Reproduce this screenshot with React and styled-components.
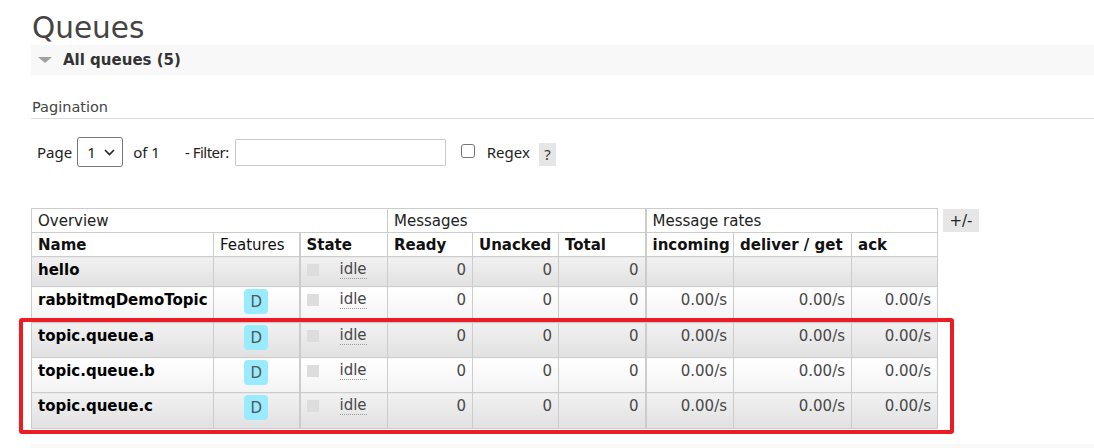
import React from 'react';
import styled, { createGlobalStyle } from 'styled-components';

const Global = createGlobalStyle`
  html, body { margin: 0; padding: 0; background: #fff; }
  body { font-family: "DejaVu Sans", Verdana, sans-serif; color: #444; }
`;

const Page = styled.div`
  position: relative;
  width: 1094px;
  height: 448px;
  overflow: hidden;
  padding-left: 31px;
  box-sizing: border-box;
`;

const Title = styled.h1`
  margin: 11px 0 0 1px;
  font-size: 29.5px;
  line-height: 34px;
  font-weight: normal;
  color: #444;
`;

const SectionBar = styled.div`
  height: 30px;
  background: #f8f8f8;
  display: flex;
  align-items: center;
  gap: 11px;
  padding-left: 7px;
  font-size: 15px;
  font-weight: bold;
  color: #333;
  margin-top: ${(p) => p.$mt || 0}px;
`;

const Triangle = styled.span`
  width: 0;
  height: 0;
  border-left: 7px solid transparent;
  border-right: 7px solid transparent;
  border-top: 6px solid #a0a0a0;
`;

const SubHeading = styled.div`
  margin-top: 23px;
  padding: 0 0 2px 1px;
  font-size: 14.5px;
  line-height: 18px;
  color: #444;
  border-bottom: 1px solid #ddd;
`;

const Controls = styled.div`
  margin-top: 18px;
  height: 30px;
  display: flex;
  align-items: center;
  padding-left: 6px;
  font-family: "Noto Sans", sans-serif;
  font-size: 15px;
  color: #222;
`;

const Text = styled.span`
  margin-left: ${(p) => p.$ml || 0}px;
  letter-spacing: ${(p) => p.$ls || 0}px;
  white-space: pre;
`;

const SelectBox = styled.div`
  margin-left: 5px;
  width: 46px;
  height: 30px;
  box-sizing: border-box;
  border: 1px solid #767676;
  border-radius: 3px;
  display: flex;
  align-items: center;
  padding-left: 9px;
  gap: 8px;
`;

const FilterInput = styled.input`
  margin-left: 6px;
  width: 211px;
  height: 27px;
  box-sizing: border-box;
  border: 1px solid #c8c8c8;
  border-radius: 1px;
  outline: none;
  padding: 0 4px;
`;

const Check = styled.input`
  appearance: none;
  margin: 0 0 0 15px;
  width: 14px;
  height: 14px;
  box-sizing: border-box;
  border: 1px solid #767676;
  border-radius: 3px;
  background: #fff;
  position: relative;
  top: -1px;
`;

const Help = styled.span`
  margin-left: 9px;
  width: 17px;
  height: 23px;
  background: #e6e6e6;
  display: flex;
  align-items: center;
  justify-content: center;
  color: #333;
  position: relative;
  top: 2px;
`;

const TableArea = styled.div`
  margin-top: 41px;
  display: flex;
  align-items: flex-start;
  gap: 5px;
`;

const Grid = styled.table`
  border-collapse: collapse;
  table-layout: fixed;
  width: 906px;
  font-size: 15px;
  line-height: 18px;
`;

const GroupHead = styled.th`
  border: 1px solid #ccc;
  border-left-width: ${(p) => (p.$thick ? 2 : 1)}px;
  text-align: left;
  font-weight: normal;
  color: #222;
  padding: 1px 6px 0;
  background: #fff;
`;

const ColHead = styled.th`
  border: 1px solid #ccc;
  border-left-width: ${(p) => (p.$thick ? 2 : 1)}px;
  text-align: left;
  font-weight: ${(p) => (p.$light ? 'normal' : 'bold')};
  color: #111;
  padding: 1px 6px 0;
  background: #fff;
  white-space: nowrap;
`;

const HeadRow = styled.tr`
  height: 24px;
`;

const BodyRow = styled.tr`
  height: ${(p) => p.$h}px;
`;

const Cell = styled.td`
  border: 1px solid #ccc;
  border-left-width: ${(p) => (p.$thick ? 2 : 1)}px;
  vertical-align: top;
  padding: ${(p) => (p.$badge ? '2px 6px 0' : '4px 6px 0')};
  text-align: ${(p) => p.$align || 'left'};
  font-weight: ${(p) => (p.$bold ? 'bold' : 'normal')};
  color: ${(p) => (p.$bold ? '#000' : '#484848')};
  background: ${(p) =>
    p.$alt
      ? 'linear-gradient(#f1f1f1, #e1e1e1)'
      : 'linear-gradient(#ffffff, #f3f3f3)'};
  white-space: nowrap;
`;

const Badge = styled.span`
  display: inline-block;
  vertical-align: top;
  padding: 4px 6px 3px;
  line-height: 18px;
  background: #99ebff;
  border-radius: 4px;
  color: #555;
`;

const StateWrap = styled.div`
  display: flex;
  align-items: flex-start;
`;

const StateDot = styled.span`
  width: 12px;
  height: 12px;
  margin-top: 3px;
  background: #ddd;
`;

const StateText = styled.abbr`
  margin-left: 21px;
  text-decoration: none;
  border-bottom: 1px dotted #999;
  line-height: 17px;
`;

const ToggleButton = styled.span`
  margin-top: 1px;
  width: 36px;
  height: 23px;
  background: #e6e6e6;
  display: flex;
  align-items: center;
  justify-content: center;
  font-size: 15px;
  color: #222;
`;

const Annotation = styled.div`
  position: absolute;
  left: 19px;
  top: 318px;
  width: 935px;
  height: 116px;
  box-sizing: border-box;
  border: 4px solid #ed1c24;
  border-radius: 3px;
  pointer-events: none;
`;

const queues = [
  { name: 'hello', badge: false, rates: false, h: 30 },
  { name: 'rabbitmqDemoTopic', badge: true, rates: true, h: 36 },
  { name: 'topic.queue.a', badge: true, rates: true, h: 35 },
  { name: 'topic.queue.b', badge: true, rates: true, h: 35 },
  { name: 'topic.queue.c', badge: true, rates: true, h: 36 },
];

const Chevron = () => (
  <svg width="11" height="7" viewBox="0 0 11 7">
    <path d="M1 1 L5.5 5.5 L10 1" fill="none" stroke="#222" strokeWidth="1.6" />
  </svg>
);

export default function App() {
  return (
    <>
      <Global />
      <Page>
        <Title>Queues</Title>
        <SectionBar>
          <Triangle />
          <span>All queues (5)</span>
        </SectionBar>
        <SubHeading>Pagination</SubHeading>
        <Controls>
          <Text>Page</Text>
          <SelectBox>
            <span>1</span>
            <Chevron />
          </SelectBox>
          <Text $ml={10}>of 1</Text>
          <Text $ml={25} $ls={-0.5}>- Filter:</Text>
          <FilterInput type="text" />
          <Check type="checkbox" />
          <Text $ml={12}>Regex</Text>
          <Help>?</Help>
        </Controls>
        <TableArea>
          <Grid>
            <colgroup>
              <col style={{ width: 182 }} />
              <col style={{ width: 86 }} />
              <col style={{ width: 88 }} />
              <col style={{ width: 85 }} />
              <col style={{ width: 86 }} />
              <col style={{ width: 87 }} />
              <col style={{ width: 88 }} />
              <col style={{ width: 118 }} />
              <col style={{ width: 86 }} />
            </colgroup>
            <thead>
              <HeadRow>
                <GroupHead colSpan={3}>Overview</GroupHead>
                <GroupHead colSpan={3}>Messages</GroupHead>
                <GroupHead colSpan={3} $thick>Message rates</GroupHead>
              </HeadRow>
              <HeadRow>
                <ColHead>Name</ColHead>
                <ColHead $light>Features</ColHead>
                <ColHead $thick>State</ColHead>
                <ColHead>Ready</ColHead>
                <ColHead>Unacked</ColHead>
                <ColHead>Total</ColHead>
                <ColHead $thick>incoming</ColHead>
                <ColHead>deliver / get</ColHead>
                <ColHead>ack</ColHead>
              </HeadRow>
            </thead>
            <tbody>
              {queues.map((q, i) => {
                const alt = i % 2 === 0;
                return (
                  <BodyRow key={q.name} $h={q.h}>
                    <Cell $alt={alt} $bold>{q.name}</Cell>
                    <Cell $alt={alt} $align="center" $badge>
                      {q.badge && <Badge>D</Badge>}
                    </Cell>
                    <Cell $alt={alt} $thick>
                      <StateWrap>
                        <StateDot />
                        <StateText>idle</StateText>
                      </StateWrap>
                    </Cell>
                    <Cell $alt={alt} $align="right">0</Cell>
                    <Cell $alt={alt} $align="right">0</Cell>
                    <Cell $alt={alt} $align="right">0</Cell>
                    <Cell $alt={alt} $align="right" $thick>{q.rates ? '0.00/s' : ''}</Cell>
                    <Cell $alt={alt} $align="right">{q.rates ? '0.00/s' : ''}</Cell>
                    <Cell $alt={alt} $align="right">{q.rates ? '0.00/s' : ''}</Cell>
                  </BodyRow>
                );
              })}
            </tbody>
          </Grid>
          <ToggleButton>+/-</ToggleButton>
        </TableArea>
        <SectionBar $mt={15} />
        <Annotation />
      </Page>
    </>
  );
}
